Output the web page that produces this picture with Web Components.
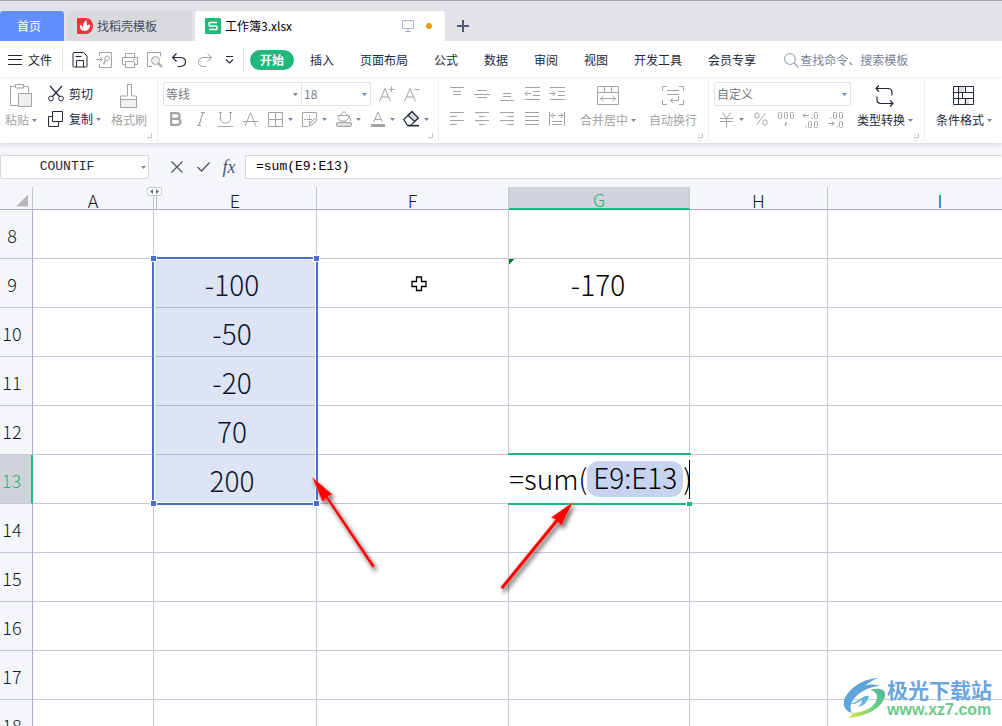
<!DOCTYPE html>
<html lang="zh-CN">
<head>
<meta charset="utf-8">
<title>工作簿3.xlsx</title>
<style>
html, body { margin: 0; height: 100%; overflow: hidden; }
body { font-family: "Noto Sans CJK SC", sans-serif; font-size: 12px; line-height: 18px; color: #23283a; background: #fff; }
</style>
</head>
<body>
<sheet-app></sheet-app>
<script>
const ICONS = {
  menu: [14, 10, '<path d="M0 .5h14M0 4.500h14M0 9.500h14"/>'],
  save: [16, 16, '<path d="M2 .5h9.500l3.500 3.500v10q0 1-1 1h-12q-1 0-1-1v-12.500q0-1 1-1z"/><path d="M4.500 15v-6.500h7v6.500M3.500 4.500h6"/>'],
  pdf: [17, 16, '<path d="M3.500 4v-3.500h12v15h-12v-3.500M0 7.500h6M4 5l2.500 2.500-2.500 2.500M9 12c-3 0-1-3 2-3.500q2.500-.5 2.500-2.500t-2.500-2q-2 0-2 2v4q0 2-2 2"/>'],
  print: [16, 15, '<path d="M3.500 4v-3.500h9v3.500M3.500 11.500h-3v-7h15v7h-3M3.500 8.500h9v6h-9zM11 6.500h2"/>'],
  preview: [16, 16, '<path d="M5 14.500h-4.500v-14h13v4"/><circle cx="8.500" cy="8.500" r="4" fill="#eee"/><path d="M11.500 11.500l3.500 3.500" stroke-width="2"/>'],
  undo: [15, 14, '<path d="M4.500.5l-4 4 4 4M.5 4.500h8.500q4.500.5 4.500 4.500t-5 4.500h-3" stroke-width="1.200"/>'],
  redo: [15, 14, '<path d="M10.500.5l4 4-4 4M14.500 4.500h-8.500q-4.500.5-4.500 4.500t5 4.500h3"/>'],
  more: [9, 8, '<path d="M1 .5h7M1 3.500l3.500 3.500 3.500-3.500" stroke-width="1.200"/>'],
  search: [15, 15, '<circle cx="6" cy="6" r="5.400" stroke-width="1.200"/><path d="M10 10l4.500 4.500" stroke-width="1.400"/>'],
  caret: [5, 3, '<path d="M0 0h5l-2.500 3z" fill="currentColor" stroke="none"/>'],
  plus: [12, 12, '<path d="M6 0v12M0 6h12" stroke-width="2"/>'],
  screen: [12, 12, '<path d="M1 .5h10q.5 0 .5.5v7.500h-11v-7.500q0-.5.5-.5zM6 8.500v3M3 11.500h6"/>'],
  docer: [16, 16, '<path d="M1 0h8a7 8 0 0 1 0 16h-8q-1 0-1-1v-14q0-1 1-1z" fill="#f9303b" stroke="none"/><path d="M9 2c2 4 1 8-2.500 11-1.500-4-.5-8 2.500-11zM3 6.500c2 1 3 3 3 6.500-2.500-1-3.500-3.500-3-6.500zM13 6.500c0 4-2 6.500-6 6.500 0-3 2.500-6 6-6.500z" fill="#fff" stroke="none"/>'],
  sheet: [16, 16, '<rect width="16" height="16" rx="1" fill="#22b978" stroke="none"/><path d="M12 4.500h-7q-1 0-1 1v1.500q0 1 1 1h6q1 0 1 1v1.500q0 1-1 1h-7" stroke="#fff" stroke-width="1.500"/>'],
  paste: [22, 24, '<path d="M8 21.500h-7.500v-19h5M13.500 2.500h5v7M5.500.5h8v3.500h-8z"/><path d="M8.500 9.500h13v13h-13z" fill="#eff0f1"/>'],
  cut: [16, 16, '<path d="M2 0l9.500 10.500M14 0l-9.500 10.500" stroke-width="1.200"/><circle cx="3" cy="12.500" r="2.400"/><circle cx="13" cy="12.500" r="2.400"/>'],
  copy: [16, 16, '<path d="M4.500.5h10v10h-10zM4 5.500h-3.500v10h10v-4.500"/>'],
  brush: [18, 24, '<path d="M7.500 11v-10.500h4v10.500l1 1h4v11.500h-16v-11.500h6q1 0 1-1z"/><path d="M.5 15.500h16v8h-16z" fill="#f0f0f0"/>'],
  bold: [13, 14, '<path d="M2.200 1.200h5q3.500 0 3.500 2.800t-3.500 2.800h-5zM2.200 6.800h5.800q3.500 0 3.500 3t-3.500 3h-5.800z" stroke-width="2.200"/>'],
  italic: [8, 14, '<path d="M4 .5h4M0 13.500h4M6 .5l-4 13" stroke-width="1.200"/>'],
  underline: [15, 15, '<path d="M2.500 0v6q0 5 5 5t5-5v-6M0 14.500h15M1 .5h3M11 .5h3"/>'],
  strike: [15, 15, '<path d="M2 14.500l5.500-14 5.500 14M0 9.500h15"/>'],
  border: [15, 15, '<path d="M.5.5h14v14h-14zM.5 7.500h14M7.500.5v14"/>'],
  draw: [16, 15, '<path d="M6 14.500h-5.500v-14h14v5"/><path d="M2 7.500h8M7.500 3v8" stroke-dasharray="2 1"/><path d="M7 14l1-3 5.500-5 2 2-5.500 5z" fill="#eee"/>'],
  fill: [16, 16, '<path d="M1.500 4.500h9l4 3v2.500M4 10q-3-3-.5-5.500l4.500-4 6 5.500-4 4z"/><rect x=".5" y="11.500" width="15" height="4" rx="1.500" fill="#ddd"/>'],
  fontcolor: [14, 15, '<path d="M2.500 10l4.500-9.500 4.500 9.500M4 7.500h6"/><path d="M0 13.500h14" stroke-width="3"/>'],
  erase: [17, 16, '<path d="M.8 8.500l8-8 6.400 6.400-7.500 7.500h-3.200z" stroke-width="1.200"/><path d="M5 4.500l4-4 6.200 6.400-3.500 3.500z" fill="#dcdde2" stroke-width="1.200"/><path d="M5 14.700h11" stroke-width="1.600"/>'],
  grow: [16, 16, '<path d="M.5 15.500l5.500-13 5.500 13M2.500 11h7M10 3.500h5.500M12.500.5v5.500"/>'],
  shrink: [16, 16, '<path d="M.5 15.500l5.500-13 5.500 13M2.500 11h7M10.500 3.500h5"/>'],
  top: [14, 14, '<path d="M0 .5h14M3 4.500h8M3 7.500h8"/>'],
  middle: [16, 14, '<path d="M3 3.500h10M0 7.500h16M3 10.500h10"/>'],
  bottom: [14, 14, '<path d="M3 6.500h8M3 9.500h8M0 13.500h14"/>'],
  outdent: [16, 14, '<path d="M1 .5h15M9 4.500h7M9 8.500h7M1 12.500h15M1 6.500h6M3.500 4l-2.500 2.500 2.500 2.500"/>'],
  indent: [16, 14, '<path d="M1 .5h15M9 4.500h7M9 8.500h7M1 12.500h15M0 6.500h6M3.500 4l2.500 2.500-2.500 2.500"/>'],
  left: [14, 14, '<path d="M0 .5h14M0 4.500h7M0 8.500h14M0 12.500h7"/>'],
  center: [14, 14, '<path d="M0 .5h14M4 4.500h6M0 8.500h14M4 12.500h6"/>'],
  right: [14, 14, '<path d="M0 .5h14M7 4.500h7M0 8.500h14M7 12.500h7"/>'],
  justify: [14, 14, '<path d="M0 .5h14M0 4.500h14M0 8.500h14M0 12.500h14"/>'],
  spread: [16, 14, '<path d="M.5 0v14M15.500 0v14M2 3.500h5M9 3.500h5M4.500 1l-2.500 2.500 2.500 2.500M11.500 1l2.500 2.500-2.500 2.500M3 9.500h10M3 12.500h10"/>'],
  merge: [22, 20, '<path d="M.5.500h21v18h-21zM.5 6.500h21M7.500.5v6M14.500.5v6M3.500 12.500h15M6.500 9.500l-3 3 3 3M15.500 9.500l3 3-3 3"/>'],
  wrap: [22, 20, '<path d="M5 .5h-4.500v4.500M17 .5h4.500v4.500M5 18.500h-4.500v-4.500M17 18.500h4.500v-4.500M5 4.500h12M5 8.500h12M16.500 10v4.500h-8M11 12l-2.500 2.500 2.500 2.500"/>'],
  yen: [13, 15, '<path d="M2 .5l4.500 5.500 4.500-5.500M0 6.500h13M0 9.500h13M6.500 6v9"/>'],
  percent: [14, 14, '<path d="M11.500 1l-9 12"/><ellipse cx="3" cy="3.500" rx="2.200" ry="2.700"/><ellipse cx="11" cy="10.500" rx="2.200" ry="2.700"/>'],
  thousand: [18, 16, '<rect x="1.500" y="1.500" width="3" height="6" rx="1"/><rect x="7.500" y="1.500" width="3" height="6" rx="1"/><rect x="13.500" y="1.500" width="3" height="6" rx="1"/><path d="M9 11v2l-1 1.500" stroke-width="1.500"/>'],
  decInc: [16, 17, '<path d="M0 4.500h6M2.500 2l-2.500 2.500 2.500 2.500M9 6.500v1.500M3 15v1.500"/><rect x="11.500" y="1.500" width="3" height="6" rx="1"/><rect x="5.500" y="10.500" width="3" height="6" rx="1"/><rect x="11.500" y="10.500" width="3" height="6" rx="1"/>'],
  decDec: [16, 17, '<path d="M0 12.500h6M3.500 10l2.500 2.500-2.500 2.500M3 6.500v1.500M9 15v1.500"/><rect x="5.500" y="1.500" width="3" height="6" rx="1"/><rect x="11.500" y="1.500" width="3" height="6" rx="1"/><rect x="11.500" y="10.500" width="3" height="6" rx="1"/>'],
  convert: [20, 22, '<path d="M4 .5l-3 3 3 3M1 3.500h12q4 0 4 4v3M15 21.500l3-3-3-3M18 18.500h-12q-4 0-4-4v-3" stroke-width="1.200"/>'],
  condition: [22, 20, '<path d="M6 1h5v6h-5zM11 13h5v6h-5z" fill="#dcdfe6" stroke="none"/><path d="M.5.5h20v18h-20zM.5 6.500h20M.5 12.500h20M5.500.5v18M12.500.5v6M9.500 6.500v6M12.500 12.500v6"/>'],
  cancel: [12, 12, '<path d="M.5.5l11 11M11.500.5l-11 11" stroke-width="1.200"/>'],
  accept: [13, 10, '<path d="M.5 5l4 4 8-8.500" stroke-width="1.300"/>']
};

class UiIcon extends HTMLElement {
  connectedCallback() {
    const [w, h, body] = ICONS[this.getAttribute('name')];
    (this.shadowRoot || this.attachShadow({ mode: 'open' })).innerHTML =
      `<style>:host{display:inline-flex;flex:none}svg{display:block;overflow:visible}</style>
       <svg width="${w}" height="${h}" viewBox="0 0 ${w} ${h}" fill="none" stroke="currentColor" aria-hidden="true">${body}</svg>`;
  }
}
customElements.define('ui-icon', UiIcon);

function define(tag, css, html) {
  const tpl = document.createElement('template');
  tpl.innerHTML = `<style>*,::before{box-sizing:border-box}button,input,select{font:inherit;color:inherit;margin:0;padding:0;border:0;background:none}${css}</style>${html}`;
  customElements.define(tag, class extends HTMLElement {
    constructor() {
      super();
      this.attachShadow({ mode: 'open' }).append(tpl.content.cloneNode(true));
    }
  });
}

class ToolButton extends HTMLElement {
  connectedCallback() {
    const name = this.getAttribute('icon');
    const caret = this.hasAttribute('menu') ? '<ui-icon class="caret" name="caret"></ui-icon>' : '';
    (this.shadowRoot || this.attachShadow({ mode: 'open' })).innerHTML = `<style>
      :host{display:block;flex:none;width:25px;color:#a2a3a6}
      :host([menu]){width:34px}
      :host([dark]){color:#23283a}
      :host([wide]),:host([big]){width:auto}
      button{font:inherit;color:inherit;border:0;background:none;padding:0;margin:0;width:100%;height:24px;display:flex;align-items:center;gap:4px;white-space:nowrap}
      .pic{width:25px;display:flex;justify-content:center;flex:none}
      .text{display:flex;align-items:center;gap:3px}
      .caret{color:#7585a5}
      :host([menu]:not([wide]):not([big])) button{gap:0}
      :host([big]) button{height:48px;flex-direction:column;gap:0}
      :host([big]) .pic{width:auto;height:28px;align-items:center}
      :host([big]) .text{height:20px}
      :host([wide]) .pic{width:16px}
      :host([wide]) button{gap:5px}
      </style><button type="button" aria-label="${this.getAttribute('label') || this.textContent}">
      <span class="pic"><ui-icon name="${name}"></ui-icon></span><span class="text"><slot></slot>${caret}</span></button>`;
  }
}
customElements.define('tool-button', ToolButton);

class DropBox extends HTMLElement {
  connectedCallback() {
    (this.shadowRoot || this.attachShadow({ mode: 'open' })).innerHTML = `<style>
      :host{display:grid;align-items:center;height:24px;color:#777a80;border:1px solid #e2e3e7;border-radius:2px;box-sizing:border-box}
      select{appearance:none;font:inherit;color:inherit;border:0;background:none;margin:0;padding:0 12px 0 2px;grid-area:1/1;width:100%;height:22px}
      ui-icon{grid-area:1/1;justify-self:end;margin-right:3px;color:#7585a5;pointer-events:none}
      </style><select aria-label="${this.getAttribute('label')}"><option>${this.getAttribute('value')}</option></select><ui-icon name="caret"></ui-icon>`;
  }
}
customElements.define('drop-box', DropBox);

define('ribbon-group', `
  :host{display:flex;position:relative;flex:none;padding:3px 5px 0 5px;border-right:1px solid #eeeff2;height:62px}
  :host([last]){border:0}
  .corner{position:absolute;right:5px;bottom:3px;width:5px;height:5px;border:solid #b9c3da;border-width:0 1px 1px 0}
  :host([last]) .corner{display:none}`,
  `<slot></slot><span class="corner"></span>`);

define('tab-strip', `
  :host{display:flex;align-items:flex-end;height:41px;background:#e1e3e7;border-top:1px solid #a9a9a9}
  button{height:30px;display:flex;align-items:center;border-radius:3px 3px 0 0;text-align:left}
  .home{width:64px;justify-content:center;background:#618ffb;color:#fff;margin-right:3px;padding-right:6px}
  .docer{width:125px;background:#d9dadd;color:#444c63;margin-right:3px;padding-left:10px;gap:4px}
  .book{width:250px;background:#fff;color:#000;padding:0 13px 0 10px;gap:4px}
  .book span{flex:1}
  .screen{color:#a9b4cb;margin-right:8px}
  i{width:6px;height:6px;border-radius:50%;background:#e69b0a}
  .new{width:36px;justify-content:center;color:#4e5b78}`,
  `<button class="home">首页</button>
   <button class="docer"><ui-icon name="docer"></ui-icon><span>找稻壳模板</span></button>
   <button class="book"><ui-icon name="sheet"></ui-icon><span>工作簿3.xlsx</span><ui-icon class="screen" name="screen"></ui-icon><i></i></button>
   <button class="new" aria-label="新建"><ui-icon name="plus"></ui-icon></button>`);

define('menu-bar', `
  :host{display:flex;align-items:center;height:38px;white-space:nowrap}
  button{height:20px}
  .file{display:flex;align-items:center;gap:6px;width:63px;padding-left:8px;border-right:1px solid #dfe1e5;height:24px}
  .quick{display:flex;width:181px;padding-left:4px;border-right:1px solid #dfe1e5}
  nav{display:flex;gap:26px;margin-left:6px}
  nav .on{background:#22b77c;color:#fff;border-radius:10px;font-weight:700;width:44px;margin-right:-10px}
  .search{display:flex;align-items:center;flex:1;min-width:0;margin-left:28px;gap:1px;color:#77839c}
  .search ui-icon{color:#9eabc1}
  input{flex:1;min-width:0;outline:0}
  input::placeholder{color:#77839c;opacity:1}`,
  `<button class="file"><ui-icon name="menu"></ui-icon>文件</button>
   <div class="quick">
    <tool-button icon="save" label="保存" dark></tool-button><tool-button icon="pdf" label="输出为PDF"></tool-button>
    <tool-button icon="print" label="打印"></tool-button><tool-button icon="preview" label="打印预览"></tool-button>
    <tool-button icon="undo" label="撤销" dark></tool-button><tool-button icon="redo" label="恢复"></tool-button>
    <tool-button icon="more" label="更多" dark></tool-button></div>
   <nav><button class="on">开始</button><button>插入</button><button>页面布局</button><button>公式</button><button>数据</button>
    <button>审阅</button><button>视图</button><button>开发工具</button><button>会员专享</button></nav>
   <label class="search"><ui-icon name="search"></ui-icon><input aria-label="搜索" placeholder="查找命令、搜索模板"></label>`);

define('tool-ribbon', `
  :host{display:flex;height:64px;box-shadow:0 1px 5px #cfd1d6;position:relative;background:#fff;overflow:visible}
  .rows{display:grid;gap:1px;align-content:start}
  .row{display:flex}
  .clip{margin:0 10px 0 11px}
  .name{width:139px}.size{width:70px;margin:0 3px 0 -1px}
  .num{width:137px}
  .merge{margin-left:11px}.wrap{margin:0 6px 0 13px}
  .convert{margin:0 6px}.cond{margin-left:6px}
  .brush{margin-right:5px}`,
  `<ribbon-group><tool-button big menu icon="paste">粘贴</tool-button>
    <div class="rows clip"><tool-button wide dark icon="cut">剪切</tool-button><tool-button wide dark menu icon="copy">复制</tool-button></div>
    <tool-button class="brush" big icon="brush">格式刷</tool-button></ribbon-group>
   <ribbon-group><div class="rows">
     <div class="row"><drop-box class="name" label="字体" value="等线"></drop-box><drop-box class="size" label="字号" value="18"></drop-box>
      <tool-button icon="grow" label="增大字号"></tool-button><tool-button icon="shrink" label="减小字号"></tool-button></div>
     <div class="row"><tool-button icon="bold" label="加粗"></tool-button><tool-button icon="italic" label="倾斜"></tool-button>
      <tool-button icon="underline" label="下划线"></tool-button><tool-button icon="strike" label="删除线"></tool-button>
      <tool-button menu icon="border" label="边框"></tool-button><tool-button menu icon="draw" label="绘图边框"></tool-button>
      <tool-button menu icon="fill" label="填充"></tool-button><tool-button menu icon="fontcolor" label="字体颜色"></tool-button>
      <tool-button menu dark icon="erase" label="清除"></tool-button></div></div></ribbon-group>
   <ribbon-group><div class="rows">
     <div class="row"><tool-button icon="top" label="顶端对齐"></tool-button><tool-button icon="middle" label="垂直居中"></tool-button>
      <tool-button icon="bottom" label="底端对齐"></tool-button><tool-button icon="outdent" label="减少缩进"></tool-button><tool-button icon="indent" label="增加缩进"></tool-button></div>
     <div class="row"><tool-button icon="left" label="左对齐"></tool-button><tool-button icon="center" label="水平居中"></tool-button>
      <tool-button icon="right" label="右对齐"></tool-button><tool-button icon="justify" label="两端对齐"></tool-button><tool-button icon="spread" label="分散对齐"></tool-button></div></div>
     <tool-button class="merge" big menu icon="merge">合并居中</tool-button><tool-button class="wrap" big icon="wrap">自动换行</tool-button></ribbon-group>
   <ribbon-group><div class="rows"><drop-box class="num" label="数字格式" value="自定义"></drop-box>
     <div class="row"><tool-button menu icon="yen" label="货币"></tool-button><tool-button icon="percent" label="百分比"></tool-button>
      <tool-button icon="thousand" label="千位分隔"></tool-button><tool-button icon="decInc" label="增加小数位"></tool-button><tool-button icon="decDec" label="减少小数位"></tool-button></div></div>
     <tool-button class="convert" big menu dark icon="convert">类型转换</tool-button></ribbon-group>
   <ribbon-group last><tool-button class="cond" big menu dark icon="condition">条件格式</tool-button></ribbon-group>`);

define('formula-bar', `
  :host{display:flex;align-items:center;height:44px;padding-top:4px;background:#f5f6f9;color:#4c566d}
  .box{height:24px;background:#fff;border:1px solid #d5d7dd;border-radius:2px;display:flex;align-items:center;font:13px/20px "Liberation Mono",monospace;color:#23283a}
  .name{width:149px;padding-right:2px;margin-right:15px;color:#23283a}
  .name input{flex:1;min-width:0;text-align:center;padding-right:8px}
  .name ui-icon{color:#7585a5}
  button{width:26px;height:24px;display:flex;align-items:center;justify-content:center}
  .fx{font:italic 18px/20px "Liberation Serif",serif}
  .entry{flex:1;margin-left:3px;border-right:0;color:#000}
  .entry input{width:100%;padding-left:10px}`,
  `<div class="box name"><input aria-label="名称框" value="COUNTIF"><ui-icon name="caret"></ui-icon></div>
   <button aria-label="取消"><ui-icon name="cancel"></ui-icon></button><button aria-label="输入"><ui-icon name="accept"></ui-icon></button>
   <button class="fx">fx</button>
   <div class="box entry"><input aria-label="编辑栏" value="=sum(E9:E13)"></div>`);

const COLS = ['A', 'E', 'F', 'G', 'H', 'I'];
const DATA = { E9: '-100', E10: '-50', E11: '-20', E12: '70', E13: '200', G9: '-170' };
let rows = '';
for (let r = 8; r <= 18; r++) {
  rows += `<tr><th scope="row"${r === 13 ? ' class="on"' : ''}>${r}</th>` + COLS.map(c => {
    const id = c + r;
    if (id === 'G13') return '<td class="edit"><div><span>=sum(</span><mark>E9:E13</mark><span>)</span></div><i></i><b></b></td>';
    return `<td${id === 'G9' ? ' class="flag"' : ''}>${DATA[id] || ''}</td>`;
  }).join('') + '</tr>';
}

define('sheet-grid', `
  :host{display:block;position:relative;overflow:hidden;flex:1;min-height:0}
  table{table-layout:fixed;width:1053px;border-collapse:separate;border-spacing:0}
  th{font-weight:300;font-size:18px;line-height:22px;background:#f5f6f9;color:#111a2c;padding:0;border:0 solid #c2c7da;border-right-width:1px;border-bottom-width:1px}
  thead th{height:23px;line-height:18px;border-bottom-color:#a7b0cb;padding-top:3px}
  tbody th{padding:2px 8px 0 0;border-right-color:#a7b0cb}
  td{height:49px;padding:2px 6px 0 0;border:0 solid #c2c7da;border-width:0 1px 1px 0;text-align:center;font-size:28px;font-weight:300;line-height:40px;color:#000;white-space:nowrap}
  td:nth-child(5){padding-right:2px}
  .on{background:#d0d3da;color:#22b77c}
  thead .on{border-bottom:2px solid #22b77c}
  tbody .on{border-right:2px solid #22b77c}
  .all span{display:block;width:12px;height:12px;margin:2px 4px 0 auto;background:#b8babd;clip-path:polygon(100% 0,100% 100%,0 100%)}
  .flag{background:linear-gradient(135deg,#0b8020 4px,transparent 4px) no-repeat}
  td.edit{position:relative;padding:0;overflow:visible}
  .edit::before{content:"";position:absolute;left:-1px;right:-2px;top:-2px;height:52px;border:solid #22b77c;border-width:2px 0;background:#fff}
  .edit div{position:relative;display:flex;align-items:center;height:48px}
  .edit span{line-height:36px;height:38px}
  mark{height:36px;line-height:33px;background:#c8d3ef;border-radius:12px;padding:0 6px;color:#000}
  .edit i{position:absolute;right:-1px;top:5px;width:1px;height:39px;background:#000}
  .edit b{position:absolute;right:-3px;bottom:-3px;width:6px;height:4px;border:solid #fff;border-width:0 0 0 1px;background:#22b77c}
  .gap{position:absolute;left:147px;top:0;width:15px;height:9px;border:1px solid #c8ccd5;border-radius:2px;background:#fff;display:flex;justify-content:center;align-items:center}
  .gap svg{display:block}
  .line{position:absolute;left:156px;top:9px;width:1px;height:13px;background:#b6bdd2}
  .range{position:absolute;left:152px;top:70px;width:166px;height:248px;border:2px solid #4a6fd0;background:rgba(74,111,208,.19);box-shadow:inset 0 0 0 1px #fff}
  .range i{position:absolute;width:7px;height:7px;border:1px solid #fff;background:#4a6fd0}
  .range i:nth-child(1){left:-4px;top:-4px}.range i:nth-child(2){right:-4px;top:-4px}
  .range i:nth-child(3){left:-4px;bottom:-4px}.range i:nth-child(4){right:-4px;bottom:-4px}
  .over{position:absolute;left:0;top:0;pointer-events:none}`,
  `<table><colgroup><col style="width:33px"><col style="width:121px"><col style="width:163px"><col style="width:192px"><col style="width:181px"><col style="width:138px"><col></colgroup>
   <thead><tr><th class="all"><span></span></th>${COLS.map(c => `<th scope="col"${c === 'G' ? ' class="on"' : ''}>${c}</th>`).join('')}</tr></thead>
   <tbody>${rows}</tbody></table>
   <span class="line"></span>
   <button class="gap" aria-label="隐藏的列"><svg width="9" height="5" viewBox="0 0 9 5" fill="#66708a"><path d="M3 0v5l-3-2.500zM6 0v5l3-2.500z"/></svg></button>
   <div class="range"><i></i><i></i><i></i><i></i></div>
   <svg class="over" width="640" height="420" viewBox="0 0 640 420">
    <g style="filter:drop-shadow(2px 3px 2px rgba(0,0,0,.55))" fill="#f00" stroke="#f7b0a8" stroke-width=".6">
     <path d="M312 290l20.500 17.500-4.500 2 47 69.500-2.500 2-46.500-69.500-3.500 3.500z"/>
     <path d="M573 315l-11.500 24-3.500-4-55 67.500-2.500-2.500 55-67.500-4.500-2z"/></g>
    <path d="M416.500 90h5v4.500h4.500v5h-4.500v4h-5v-4h-4.500v-5h4.500z" fill="#fff" stroke="#000" stroke-width="1.300"/></svg>`);

define('site-mark', `
  :host{position:absolute;right:10px;bottom:7px;display:flex;align-items:center;gap:1px}
  div{display:grid}
  strong{font:700 21px/24px "Noto Sans CJK SC",sans-serif;color:#6ba5dc}
  a{font:700 16px/18px "Liberation Sans",sans-serif;color:#6dc98a;text-decoration:none}`,
  `<svg width="44" height="42" viewBox="0 0 44 42" aria-hidden="true">
    <defs><linearGradient id="g" x1="0" y1="1" x2="1" y2="0"><stop offset="0" stop-color="#e4e94b"/><stop offset=".5" stop-color="#6fcf7f"/><stop offset="1" stop-color="#55b6a4"/></linearGradient></defs>
    <path d="M38 1C20 1 5 13 2 24c-1 6 2 10 8 12-4-7 0-14 8-20 6-4 13-7 20-7-6-2-11-2-15 0 4-4 9-7 15-8z" fill="#5da3dc"/>
    <path d="M4 24c5 4 9 2 14-2 4-3 7-4 9-3-1 6-6 10-11 11 3-3 4-5 4-7-5 4-11 6-16 1z" fill="#67b4d6"/>
    <path d="M28 13c9-3 16-1 15 6-2 11-18 21-38 22 3-1 5-3 6-5 14-1 24-8 24-16 0-4-3-6-7-7z" fill="url(#g)"/></svg>
   <div><strong>极光下载站</strong><a href="http://www.xz7.com">www.xz7.com</a></div>`);

define('sheet-app', `
  :host{display:flex;flex-direction:column;height:100vh;position:relative;overflow:hidden}
  tool-ribbon{z-index:1}`,
  `<tab-strip></tab-strip><menu-bar></menu-bar><tool-ribbon></tool-ribbon><formula-bar></formula-bar><sheet-grid></sheet-grid><site-mark></site-mark>`);
</script>
</body>
</html>
